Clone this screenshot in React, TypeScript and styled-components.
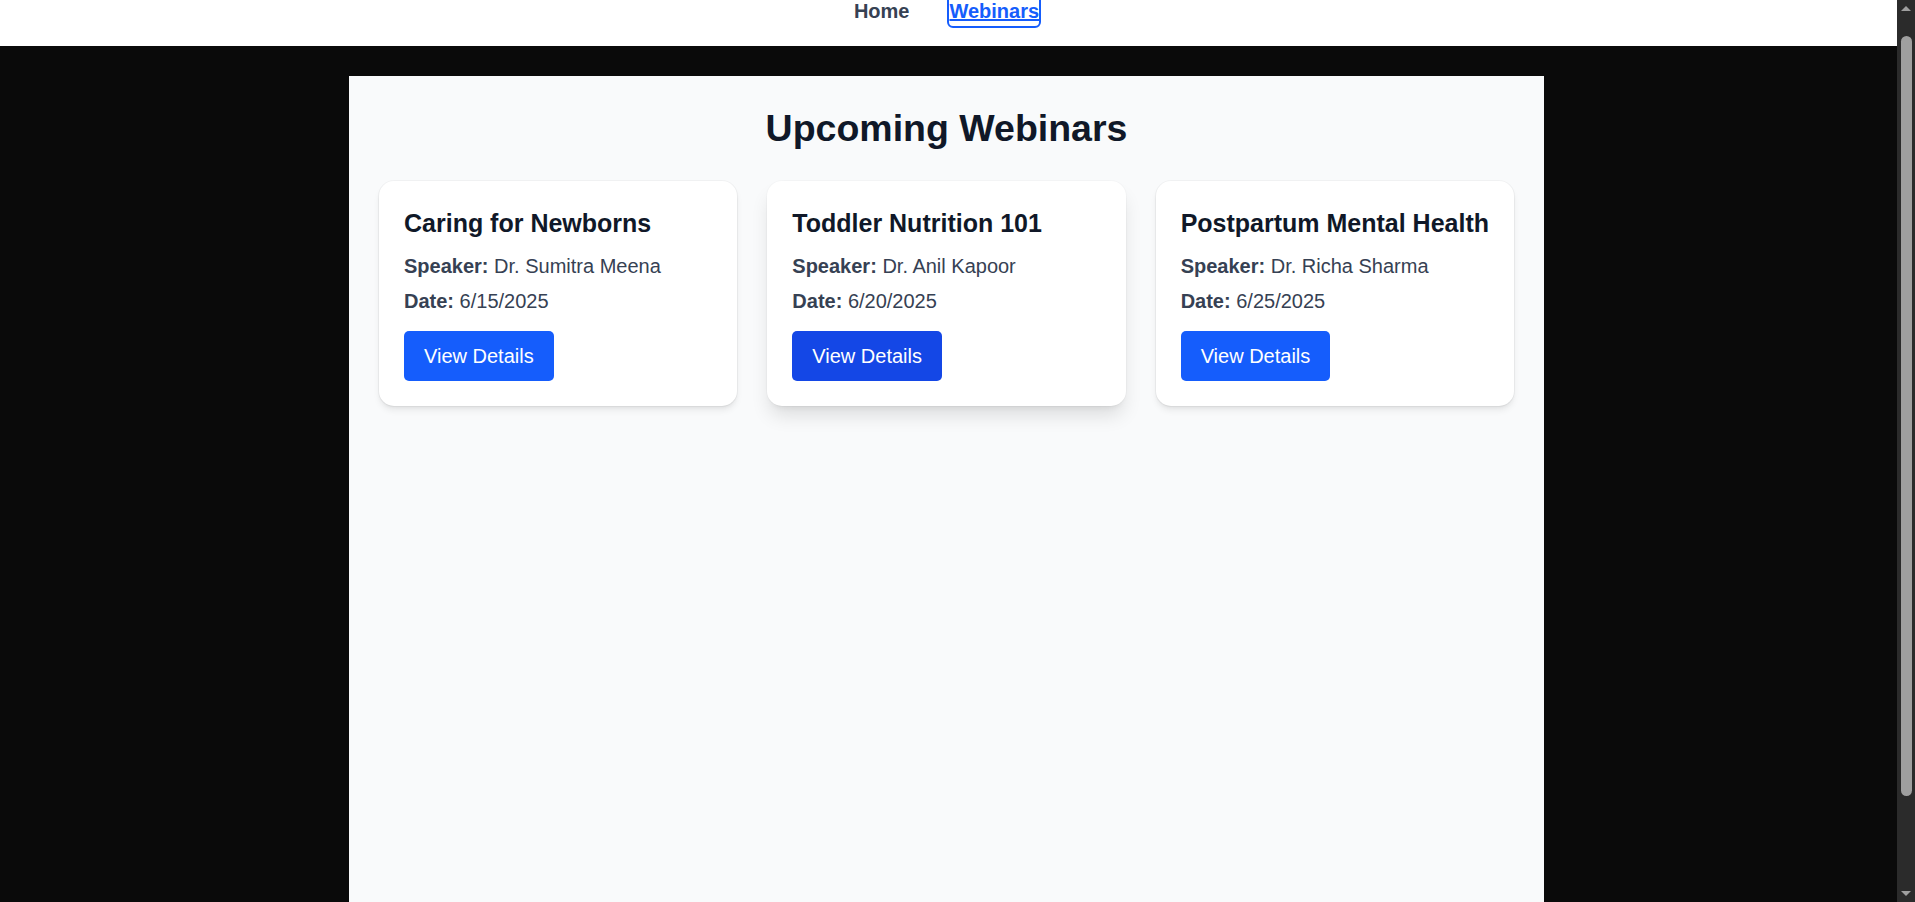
import React, { useLayoutEffect } from "react";
import styled, { createGlobalStyle } from "styled-components";

const GlobalStyle = createGlobalStyle`
  html, body {
    margin: 0;
    padding: 0;
  }
  body {
    background: #0a0a0a;
    font-family: "Liberation Sans", Arial, Helvetica, sans-serif;
  }
`;

const Page = styled.div`
  min-height: 100vh;
  background: #0a0a0a;
`;

const Header = styled.header`
  background: #ffffff;
  display: flex;
  justify-content: center;
  gap: 40px;
  padding: 18px 22px 20px 0;
`;

const NavLink = styled.a<{ $active?: boolean }>`
  display: inline-block;
  font-size: 20px;
  line-height: 30px;
  font-weight: 700;
  color: ${(p) => (p.$active ? "#155dfc" : "#364153")};
  text-decoration: ${(p) => (p.$active ? "underline" : "none")};
  border-radius: 4px;
  outline: ${(p) => (p.$active ? "2px solid #155dfc" : "none")};
  cursor: pointer;
`;

const Main = styled.main`
  padding: 30px 22px 30px 0;
`;

const Panel = styled.section`
  box-sizing: border-box;
  width: 1195px;
  min-height: 902px;
  margin: 0 auto;
  padding: 30px;
  background: #f9fafb;
`;

const Heading = styled.h1`
  margin: 0 0 30px;
  text-align: center;
  font-size: 37.5px;
  line-height: 45px;
  font-weight: 700;
  color: #101828;
`;

const Grid = styled.div`
  display: grid;
  grid-template-columns: repeat(3, 1fr);
  gap: 30px;
  align-items: start;
`;

const Card = styled.article<{ $hover?: boolean }>`
  background: #ffffff;
  border-radius: 15px;
  padding: 25px;
  box-shadow: ${(p) =>
    p.$hover
      ? "0 0 0 1px rgba(0,0,0,0.02), 0 12.5px 18.75px -3.75px rgba(0,0,0,0.12), 0 5px 7.5px -5px rgba(0,0,0,0.1)"
      : "0 0 0 1px rgba(0,0,0,0.035), 0 5px 7.5px -1.25px rgba(0,0,0,0.08), 0 2.5px 5px -2.5px rgba(0,0,0,0.08)"};
`;

const CardTitle = styled.h2`
  margin: 0 0 10px;
  font-size: 25px;
  line-height: 35px;
  font-weight: 700;
  color: #101828;
  white-space: nowrap;
`;

const Meta = styled.p`
  margin: 0 0 5px;
  font-size: 20px;
  line-height: 30px;
  color: #364153;
`;

const Label = styled.strong`
  font-weight: 700;
`;

const DetailsButton = styled.button<{ $hover?: boolean }>`
  display: block;
  margin-top: 15px;
  padding: 10px 20px;
  border: none;
  border-radius: 5px;
  background: ${(p) => (p.$hover ? "#1447e6" : "#155dfc")};
  color: #ffffff;
  font-family: inherit;
  font-size: 20px;
  line-height: 30px;
  cursor: pointer;
`;

/* Browser scrollbar, drawn as a fixed overlay on the right edge */
const ScrollBar = styled.div`
  position: fixed;
  top: 0;
  right: 0;
  width: 18px;
  height: 100vh;
  background: #2b2b2b;
  display: flex;
  flex-direction: column;
  align-items: center;
`;

const ScrollArrow = styled.div<{ $down?: boolean }>`
  flex: 0 0 17px;
  width: 18px;
  display: flex;
  align-items: center;
  justify-content: center;
  margin-top: ${(p) => (p.$down ? "auto" : "0")};

  &::before {
    content: "";
    width: 0;
    height: 0;
    border-left: 5px solid transparent;
    border-right: 5px solid transparent;
    ${(p) =>
      p.$down
        ? "border-top: 5px solid #9f9f9f;"
        : "border-bottom: 5px solid #9f9f9f;"}
  }
`;

const ScrollThumb = styled.div`
  margin-top: 19px;
  margin-left: 1px;
  width: 11px;
  height: 760px;
  border-radius: 6px;
  background: #9f9f9f;
`;

type Webinar = { title: string; speaker: string; date: string };

const webinars: Webinar[] = [
  { title: "Caring for Newborns", speaker: "Dr. Sumitra Meena", date: "6/15/2025" },
  { title: "Toddler Nutrition 101", speaker: "Dr. Anil Kapoor", date: "6/20/2025" },
  { title: "Postpartum Mental Health", speaker: "Dr. Richa Sharma", date: "6/25/2025" },
];

export default function App() {
  useLayoutEffect(() => {
    window.scrollTo(0, 22);
  }, []);

  return (
    <>
      <GlobalStyle />
      <Page>
        <Header>
          <NavLink>Home</NavLink>
          <NavLink $active>Webinars</NavLink>
        </Header>
        <Main>
          <Panel>
            <Heading>Upcoming Webinars</Heading>
            <Grid>
              {webinars.map((w, i) => (
                <Card key={w.title} $hover={i === 1}>
                  <CardTitle>{w.title}</CardTitle>
                  <Meta>
                    <Label>Speaker:</Label> {w.speaker}
                  </Meta>
                  <Meta>
                    <Label>Date:</Label> {w.date}
                  </Meta>
                  <DetailsButton $hover={i === 1}>View Details</DetailsButton>
                </Card>
              ))}
            </Grid>
          </Panel>
        </Main>
      </Page>
      <ScrollBar aria-hidden="true">
        <ScrollArrow />
        <ScrollThumb />
        <ScrollArrow $down />
      </ScrollBar>
    </>
  );
}
